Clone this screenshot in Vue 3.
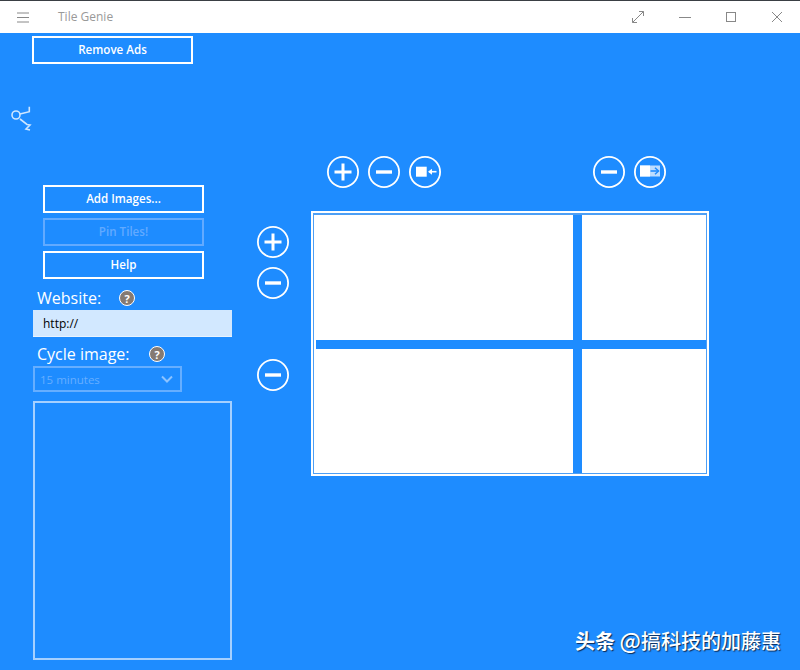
<template>
  <div class="app">
    <header class="titlebar">
      <button type="button" class="menu-btn" aria-label="Menu">
        <svg width="14" height="11" viewBox="0 0 14 11"><path d="M1 1h12M1 5.500h12M1 10h12" stroke="#888" fill="none" /></svg>
      </button>
      <span class="app-title">Tile Genie</span>
      <div class="win-controls">
        <svg width="12" height="12" viewBox="0 0 12 12" class="win-expand"><path d="M.5 11.500l11-11M7 .5h4.500V5M.5 7v4.500H5" stroke="#888" fill="none" /></svg>
        <svg width="12" height="12" viewBox="0 0 12 12" class="win-min"><path d="M0 6.500h12" stroke="#888" fill="none" /></svg>
        <svg width="12" height="12" viewBox="0 0 12 12" class="win-max"><rect x="1.500" y="1.500" width="9" height="9" stroke="#888" fill="none" /></svg>
        <svg width="12" height="12" viewBox="0 0 12 12" class="win-close"><path d="M1 1l10 10M11 1L1 11" stroke="#888" fill="none" /></svg>
      </div>
    </header>

    <main class="content">
      <aside class="side">
        <button type="button" class="btn btn--ads">Remove Ads</button>
        <svg class="curl" width="24" height="28" viewBox="0 0 24 28">
          <circle cx="7" cy="11" r="4" />
          <path d="M20.300 2.700v5L11 10M11 15l7 5.500 3 .5-4 4 4 1" />
        </svg>

        <div class="actions">
          <button type="button" class="btn">Add Images...</button>
          <button type="button" class="btn" disabled>Pin Tiles!</button>
          <button type="button" class="btn">Help</button>
        </div>

        <div class="field-label field-label--site">
          <span class="label-text">Website:</span>
          <span class="hint">?</span>
        </div>
        <input class="site-input" type="text" value="http://" aria-label="Website" />

        <div class="field-label field-label--cycle">
          <span class="label-text">Cycle image:</span>
          <span class="hint">?</span>
        </div>
        <div class="select">
          <span>15 minutes</span>
          <svg width="12" height="8" viewBox="0 0 12 8"><path d="M1 1.500l5 5 5-5" fill="none" stroke="#8cc3ff" stroke-width="2" /></svg>
        </div>
        <div class="image-list"></div>
      </aside>

      <div class="row-tools">
        <button v-for="t in rowTools" :key="t.id" type="button" class="round" :class="t.cls" :aria-label="t.id">
          <svg width="32" height="32" viewBox="0 0 32 32"><path :d="t.d" /></svg>
        </button>
      </div>

      <section class="editor">
        <div class="col-tools">
          <button type="button" class="round" aria-label="add column">
            <svg width="32" height="32" viewBox="0 0 32 32"><path :d="PLUS" /></svg>
          </button>
          <button type="button" class="round" aria-label="remove column">
            <svg width="32" height="32" viewBox="0 0 32 32"><path :d="MINUS" /></svg>
          </button>
          <button type="button" class="round" aria-label="import">
            <svg width="32" height="32" viewBox="0 0 32 32">
              <rect x="7" y="10.700" width="10.700" height="10" fill="#fff" />
              <path d="M20 15.700h7.500" stroke="#fff" stroke-width="1.600" fill="none" />
              <path d="M23 12.700l-4 3 4 3z" fill="#fff" />
            </svg>
          </button>
          <button type="button" class="round round--gap" aria-label="remove">
            <svg width="32" height="32" viewBox="0 0 32 32"><path :d="MINUS" /></svg>
          </button>
          <button type="button" class="round" aria-label="export">
            <svg width="32" height="32" viewBox="0 0 32 32">
              <rect x="6" y="9.500" width="20" height="11" fill="#fff" fill-opacity=".7" />
              <rect x="6" y="9.500" width="10" height="11" fill="#fff" />
              <path d="M16.500 15h8" stroke="#1e8cff" stroke-width="1.600" fill="none" />
              <path d="M21 11.800l3.500 3.200-3.500 3.200" stroke="#1e8cff" stroke-width="1.500" fill="none" />
            </svg>
          </button>
        </div>

        <div class="canvas">
          <div class="tiles">
            <div v-for="n in 4" :key="n" class="tile"></div>
          </div>
        </div>
      </section>
    </main>

    <div class="watermark"><b>头条</b> <span class="at">@</span>搞科技的加藤惠</div>
  </div>
</template>

<script setup>
const PLUS = 'M7.500 14.500h7v-7h3v7h7v3h-7v7h-3v-7h-7z'
const MINUS = 'M8 14.300h16v3.400H8z'

const rowTools = [
  { id: 'add row', d: PLUS, cls: '' },
  { id: 'remove row', d: MINUS, cls: '' },
  { id: 'remove', d: MINUS, cls: 'round--far' },
]
</script>

<style>
html,
body {
  margin: 0;
  background: #1e8cff;
}
</style>

<style scoped>
.app {
  position: relative;
  width: 800px;
  height: 670px;
  overflow: hidden;
  background: #1e8cff;
  font-family: "Open Sans", "Noto Sans", sans-serif;
  color: #fff;
}

.titlebar {
  display: flex;
  align-items: center;
  height: 32px;
  background: #fff;
  border-top: 1px solid #3a3f44;
}
.menu-btn {
  display: flex;
  width: 14px;
  margin-left: 16px;
  padding: 0;
  border: none;
  background: none;
}
.app-title {
  margin: 0 0 2px 28px;
  font-size: 12px;
  color: #999;
}
.win-controls {
  display: flex;
  align-items: center;
  margin-left: auto;
  margin-right: 17px;
}
.win-expand { margin-right: 35px; }
.win-min { margin-right: 34px; }
.win-max { margin-right: 34px; }

.content {
  display: grid;
  grid-template-columns: 257px 54px 1fr;
}

.btn {
  display: block;
  box-sizing: border-box;
  width: 161px;
  height: 28px;
  padding: 0 0 2px;
  border: 2px solid #fff;
  background: transparent;
  color: #fff;
  font: 600 11.600px "Open Sans", sans-serif;
}
.btn:disabled {
  border-color: #62aaff;
  color: #62aaff;
}
.btn--ads {
  margin: 3px 0 0 32px;
}

.curl {
  display: block;
  margin: 40px 0 0 9px;
  fill: none;
  stroke: #cfe6ff;
  stroke-width: 1.600;
}

.actions {
  display: flex;
  flex-direction: column;
  gap: 5px;
  margin: 53px 0 0 43px;
}

.field-label {
  display: flex;
  align-items: center;
  height: 22px;
  margin-left: 37px;
  font-size: 16px;
  font-weight: 400;
}
.field-label--site {
  margin-top: 8px;
}
.field-label--cycle {
  margin-top: 6px;
}
.label-text {
  width: 82px;
  white-space: nowrap;
}
.field-label--cycle .label-text {
  width: 112px;
}
.hint {
  display: flex;
  align-items: center;
  justify-content: center;
  box-sizing: border-box;
  width: 16px;
  height: 16px;
  border: 1.500px solid #fff;
  border-radius: 50%;
  background: #857a72;
  font-size: 11px;
  font-weight: 700;
}

.site-input {
  display: block;
  box-sizing: border-box;
  width: 199px;
  height: 27px;
  margin: 1px 0 0 33px;
  padding: 0 10px;
  border: none;
  border-bottom: 1px solid #e8f3ff;
  border-radius: 0;
  background: #d2e8ff;
  color: #000;
  font: 12px "Open Sans", sans-serif;
}

.select {
  display: flex;
  align-items: center;
  justify-content: space-between;
  box-sizing: border-box;
  width: 149px;
  height: 26px;
  margin: 1px 0 0 33px;
  padding: 0 7px 0 5px;
  border: 2px solid #66aeff;
  color: #66aeff;
  font-size: 11.500px;
}

.image-list {
  box-sizing: border-box;
  width: 199px;
  height: 259px;
  margin: 9px 0 0 33px;
  border: 2px solid #a5d0ff;
}

.round {
  display: block;
  box-sizing: border-box;
  width: 32px;
  height: 32px;
  padding: 0;
  border: none;
  border-radius: 50%;
  background: transparent;
  box-shadow: inset 0 0 0 1.800px #fff;
  fill: #fff;
}
.round svg {
  display: block;
}

.row-tools {
  display: flex;
  flex-direction: column;
  gap: 9px;
  padding-top: 193px;
}
.round--far {
  margin-top: 51px;
}

.col-tools {
  display: flex;
  gap: 9px;
  margin: 123px 0 23px 16px;
}
.round--gap {
  margin-left: 143px;
}

.canvas {
  box-sizing: border-box;
  width: 398px;
  height: 265px;
  padding: 2px 1px 1px 1px;
  border: 2px solid #fff;
  background: #4d9ff5;
}
.tiles {
  display: grid;
  grid-template-columns: 257px 124px;
  grid-template-rows: 125px 124px;
  gap: 9px;
  width: 392px;
  height: 258px;
  box-sizing: border-box;
  border-left: 2px solid #fff;
  background: #1e8cff;
}
.tile {
  background: #fff;
}

.watermark {
  position: absolute;
  right: 19px;
  bottom: 15px;
  font: 500 20px "Noto Sans CJK SC", sans-serif;
  line-height: 28px;
  white-space: nowrap;
  text-shadow: 1px 1px 1px #0b2a55;
}
.watermark b {
  font-weight: 700;
}
.at {
  font-size: 22px;
}
</style>
